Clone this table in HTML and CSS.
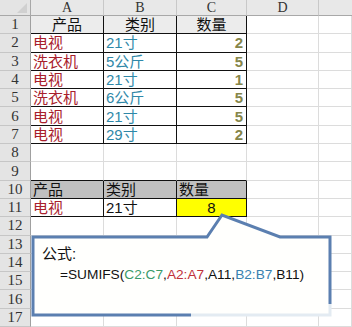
FILE: index.html
```html
<!DOCTYPE html>
<html>
<head>
<meta charset="utf-8">
<link rel="stylesheet" href="styles.css">
</head>
<body>
<div class="sheet">
  <div class="grid">
    <div class="ch corner"><span class="tri"></span></div><div class="ch">A</div><div class="ch">B</div><div class="ch">C</div><div class="ch">D</div><div class="ch last"></div>

    <div class="rh">1</div><div class="c t th">产品</div><div class="c t th">类别</div><div class="c t th">数量</div><div class="c"></div><div class="c"></div>
    <div class="rh">2</div><div class="c t red">电视</div><div class="c t blue">21寸</div><div class="c t num">2</div><div class="c"></div><div class="c"></div>
    <div class="rh">3</div><div class="c t red">洗衣机</div><div class="c t blue">5公斤</div><div class="c t num">5</div><div class="c"></div><div class="c"></div>
    <div class="rh">4</div><div class="c t red">电视</div><div class="c t blue">21寸</div><div class="c t num">1</div><div class="c"></div><div class="c"></div>
    <div class="rh">5</div><div class="c t red">洗衣机</div><div class="c t blue">6公斤</div><div class="c t num">5</div><div class="c"></div><div class="c"></div>
    <div class="rh">6</div><div class="c t red">电视</div><div class="c t blue">21寸</div><div class="c t num">5</div><div class="c"></div><div class="c"></div>
    <div class="rh">7</div><div class="c t red">电视</div><div class="c t blue">29寸</div><div class="c t num">2</div><div class="c"></div><div class="c"></div>
    <div class="rh">8</div><div class="c"></div><div class="c"></div><div class="c"></div><div class="c"></div><div class="c"></div>
    <div class="rh">9</div><div class="c tb"></div><div class="c tb"></div><div class="c tb"></div><div class="c"></div><div class="c"></div>
    <div class="rh">10</div><div class="c t gray">产品</div><div class="c t gray">类别</div><div class="c t gray">数量</div><div class="c"></div><div class="c"></div>
    <div class="rh">11</div><div class="c t red">电视</div><div class="c t">21寸</div><div class="c t yellow">8</div><div class="c"></div><div class="c"></div>
    <div class="rh">12</div><div class="c"></div><div class="c"></div><div class="c"></div><div class="c"></div><div class="c"></div>
    <div class="rh">13</div><div class="c"></div><div class="c"></div><div class="c"></div><div class="c"></div><div class="c"></div>
    <div class="rh">14</div><div class="c"></div><div class="c"></div><div class="c"></div><div class="c"></div><div class="c"></div>
    <div class="rh">15</div><div class="c"></div><div class="c"></div><div class="c"></div><div class="c"></div><div class="c"></div>
    <div class="rh">16</div><div class="c"></div><div class="c"></div><div class="c"></div><div class="c"></div><div class="c"></div>
    <div class="rh">17</div><div class="c"></div><div class="c"></div><div class="c"></div><div class="c"></div><div class="c"></div>
  </div>

  <svg class="callout-shape" width="352" height="327" viewBox="0 0 352 327">
    <polygon points="33,237 207,237 222,215 280,237 330,237 330,315 33,315" fill="#fffffd"/>
    <polyline points="191,315 330,315 330,304" fill="none" stroke="#e3ebf2" stroke-width="3"/>
    <polyline points="191,315 33,315 33,237 207,237 222,215 280,237 330,237 330,304" fill="none" stroke="#5b7fb0" stroke-width="3" stroke-linejoin="miter"/>
  </svg>
  <div class="callout-text">
    <div class="label">公式:</div>
    <div class="formula">=SUMIFS(<span class="fg">C2:C7</span>,<span class="fr">A2:A7</span>,A11,<span class="fb">B2:B7</span>,B11)</div>
  </div>
</div>
</body>
</html>
```
FILE: styles.css
```css
* { box-sizing: border-box; }
html, body { margin: 0; padding: 0; background: #ffffff; }
body { width: 352px; height: 327px; overflow: hidden; }

.sheet { position: relative; width: 352px; height: 327px; }

.grid {
  display: grid;
  grid-template-columns: 31px 73px 73px 70px 72px 33px;
  grid-template-rows: 16px repeat(17, 18.3px);
  font-family: "Liberation Sans", "Noto Sans CJK SC", sans-serif;
}

.ch {
  background: #e8e8e8;
  border-right: 1px solid #c8c8c8;
  border-bottom: 1px solid #a8a8a8;
  font-family: "Liberation Serif", "DejaVu Serif", serif;
  font-size: 14px;
  color: #333;
  display: flex;
  align-items: center;
  justify-content: center;
  line-height: 1;
}
.ch.corner { position: relative; background: #e4e4e4; border-right-color: #a8a8a8; }
.ch.corner .tri {
  position: absolute;
  right: 3px;
  bottom: 2px;
  width: 0;
  height: 0;
  border-left: 10px solid transparent;
  border-bottom: 10px solid #d0d0d0;
}
.ch.last { border-right: none; }

.rh {
  background: #e4e4e4;
  border-right: 1px solid #a0a0a0;
  border-bottom: 1px solid #c6c6c6;
  font-family: "Liberation Serif", "DejaVu Serif", serif;
  font-size: 15px;
  color: #333;
  display: flex;
  align-items: center;
  justify-content: center;
  line-height: 1;
}

.c {
  border-right: 1px solid #dcdcdc;
  border-bottom: 1px solid #dcdcdc;
  display: flex;
  align-items: center;
  padding: 0 2px;
  font-size: 15px;
  line-height: 1;
  color: #111;
  white-space: nowrap;
}

.c.t { border-right-color: #111; border-bottom-color: #111; }
.c.tb { border-bottom-color: #111; }
.c.th { justify-content: center; background: #ececec; color: #111; }
.c.gray { background: #c0c0c0; color: #111; }
.c.red { color: #a8202c; }
.c.blue { color: #2f88a8; }
.c.num {
  justify-content: flex-end;
  font-weight: bold;
  color: #86864a;
  padding-right: 3px;
}
.c.yellow {
  background: #ffff00;
  justify-content: center;
}

.callout-shape { position: absolute; left: 0; top: 0; }

.callout-text {
  position: absolute;
  left: 35px;
  top: 239px;
  width: 292px;
  height: 74px;
  display: flex;
  flex-direction: column;
  padding: 6px 0 0 7px;
  font-family: "Liberation Sans", "Noto Sans CJK SC", sans-serif;
  color: #111;
}
.label {
  font-size: 15px;
  line-height: 17px;
}
.formula {
  font-size: 13.7px;
  line-height: 16px;
  margin-top: 5px;
  padding-left: 18px;
  white-space: nowrap;
}
.fg { color: #3a9a6a; }
.fr { color: #c0303a; }
.fb { color: #3a82b0; }
```
